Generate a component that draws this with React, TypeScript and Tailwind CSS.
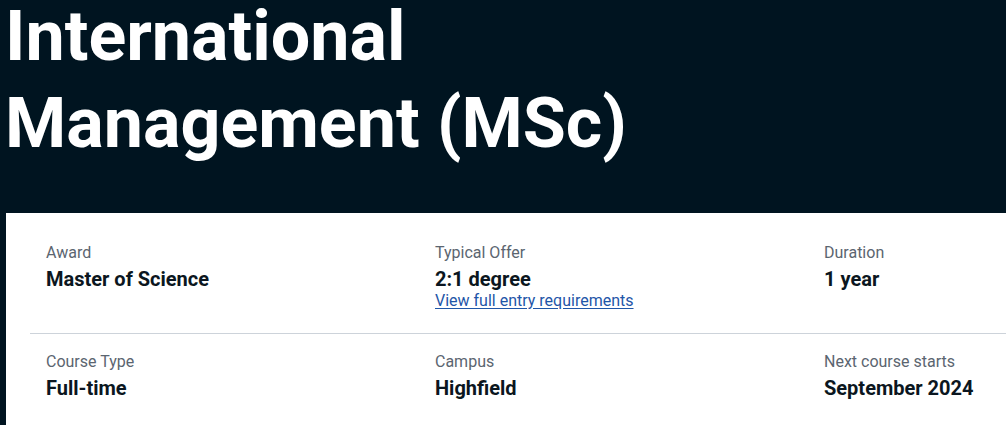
export default function App()
{
  const rows = [
    [
      { label: 'Award', value: 'Master of Science' },
      { label: 'Typical Offer', value: '2:1 degree', link: 'View full entry requirements' },
      { label: 'Duration', value: '1 year' },
    ],
    [
      { label: 'Course Type', value: 'Full-time' },
      { label: 'Campus', value: 'Highfield' },
      { label: 'Next course starts', value: 'September 2024' },
    ],
  ];

  return (
    <div className="h-[425px] w-[1006px] overflow-hidden bg-[#001420] font-['Roboto',sans-serif]">
      {/* page title */}
      <h1 className="-mt-[7px] pl-[5px] text-[70px] leading-[87px] font-bold text-white">
        International<br />Management (MSc)
      </h1>

      {/* key facts card */}
      <div className="mt-[46px] ml-[6px] bg-white h-[300px]">
        {rows.map((row, i) => (
          <div
            key={i}
            className={`ml-6 pl-4 grid grid-cols-[389px_389px_1fr] ${i === 0 ? 'pt-[28px] pb-[22px] border-b border-[#cdd3da]' : 'pt-4'}`}
          >
            {row.map((item) => (
              <div key={item.label} className="flex flex-col">
                <p className="text-[16px] leading-[24px] text-[#5b6570]">{item.label}</p>
                <p className="mt-[2px] text-[20px] leading-[24px] font-bold text-[#0b1620]">{item.value}</p>
                {item.link && (
                  <a href="#" className="text-[16px] leading-[20px] text-[#1f56a8] underline underline-offset-2">
                    {item.link}
                  </a>
                )}
              </div>
            ))}
          </div>
        ))}
      </div>
    </div>
  );
}
